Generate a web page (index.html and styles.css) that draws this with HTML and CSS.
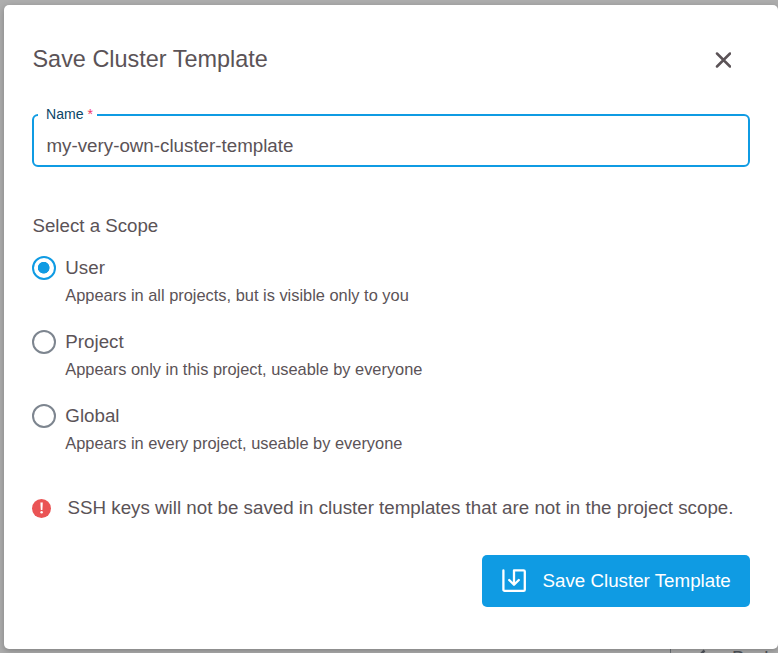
FILE: index.html
```html
<!DOCTYPE html>
<html lang="en">
<head>
<meta charset="utf-8">
<title>Save Cluster Template</title>
<link rel="stylesheet" href="styles.css">
</head>
<body>
<div class="page-footer">
  <svg class="back-icon" width="12" height="18" viewBox="0 0 12 18"><path d="M10.500 1.500L3 9l7.500 7.500" fill="none" stroke="currentColor" stroke-width="2.500"/></svg>
  <span>Back</span>
</div>
<main class="dialog">
  <header class="head">
    <h1>Save Cluster Template</h1>
    <button class="close" aria-label="Close"><svg width="16" height="16" viewBox="0 0 16 16"><path d="M2 1.500l13 13M15 1.500l-13 13" fill="none" stroke="currentColor" stroke-width="2.500" stroke-linecap="round"/></svg></button>
  </header>
  <fieldset class="field">
    <legend>Name <span class="star">*</span></legend>
    <div class="value">my-very-own-cluster-template</div>
  </fieldset>
  <h2>Select a Scope</h2>
  <div class="options">
    <div class="option"><span class="radio on"></span><div><div class="label">User</div><div class="hint">Appears in all projects, but is visible only to you</div></div></div>
    <div class="option"><span class="radio"></span><div><div class="label">Project</div><div class="hint">Appears only in this project, useable by everyone</div></div></div>
    <div class="option"><span class="radio"></span><div><div class="label">Global</div><div class="hint">Appears in every project, useable by everyone</div></div></div>
  </div>
  <div class="notice">
    <svg width="20" height="20" viewBox="0 0 20 20"><circle cx="9.500" cy="10.500" r="9.500" fill="#ea5455"/><path d="M8.400 4.400h2.400l-.4 7.600H8.800z" fill="#fff"/><circle cx="9.600" cy="14.200" r="1.250" fill="#fff"/></svg>
    <span>SSH keys will not be saved in cluster templates that are not in the project scope.</span>
  </div>
  <div class="actions">
    <button class="save"><svg width="24" height="25" viewBox="0 0 24 25"><path d="M1.400 1.500v19.200a1.200 1.200 0 0 0 1.200 1.200h19a1.200 1.200 0 0 0 1.200-1.200V2.500a1.200 1.200 0 0 0-1.200-1.200H12v14.500M7.200 11l4.800 4.800 4.800-4.800" fill="none" stroke="#fff" stroke-width="2.300" stroke-linecap="round" stroke-linejoin="round"/></svg><span>Save Cluster Template</span></button>
  </div>
</main>
</body>
</html>
```
FILE: styles.css
```css
* { box-sizing: border-box; }
body {
  margin: 0;
  padding: 5px 0 0 4px;
  height: 653px;
  overflow: hidden;
  position: relative;
  background: #adadad;
  color: #5b5357;
  font-family: "Liberation Sans", Arial, sans-serif;
  font-size: 18.76px;
}
h1, h2 { margin: 0; font-weight: 400; }
button { border: 0; padding: 0; font: inherit; color: inherit; background: none; }
svg { display: block; flex: none; }
.page-footer {
  position: absolute;
  left: 670px;
  top: 641px;
  height: 34px;
  padding-left: 23px;
  display: flex;
  align-items: center;
  gap: 26px;
  border-left: 1px solid #70757a;
  color: #50555c;
}
.dialog {
  position: relative;
  width: 774px;
  height: 644px;
  padding: 36px 28px 0;
  background: #fff;
  border-radius: 5px;
  box-shadow: 0 2px 6px rgba(0, 0, 0, .25);
}
.head {
  display: flex;
  justify-content: space-between;
  height: 36px;
  padding-right: 19px;
}
h1 { padding-left: .5px; font-size: 23.43px; line-height: 36px; }
.close { height: 38px; }
.field {
  margin: 29px 0 0;
  padding: 0 12.500px;
  height: 61px;
  min-width: 0;
  border: 2px solid #0f9be3;
  border-radius: 6px;
}
.field legend {
  margin-left: -8.500px;
  padding: 0 4px 2px 8px;
  font-size: 14.07px;
  line-height: 16px;
  color: #0b4667;
}
.star { color: #ef3768; }
.value { line-height: 28px; padding-top: 8px; }
h2 { margin-top: 44px; padding-left: .5px; font-size: 18.70px; line-height: 30px; }
.options { margin-top: 12px; }
.option { display: flex; gap: 9.300px; height: 74px; }
.radio {
  width: 24px;
  height: 24px;
  margin-top: 3px;
  border: 2px solid #7d858f;
  border-radius: 50%;
  flex: none;
}
.on {
  border-color: #0f9be3;
  background: radial-gradient(circle at 9.700px 9.700px, #0f9be3 5.500px, transparent 6.200px);
}
.label { line-height: 30px; }
.hint { font-size: 16.4px; line-height: 24px; }
.notice { display: flex; align-items: center; gap: 15.500px; height: 30px; margin-top: 18px; }
.actions { display: flex; justify-content: flex-end; margin-top: 32px; }
.save {
  display: flex;
  align-items: center;
  gap: 16.500px;
  width: 268px;
  height: 52px;
  padding-left: 20px;
  border-radius: 5px;
  background: #0f9be3;
  color: #fff;
}
```
